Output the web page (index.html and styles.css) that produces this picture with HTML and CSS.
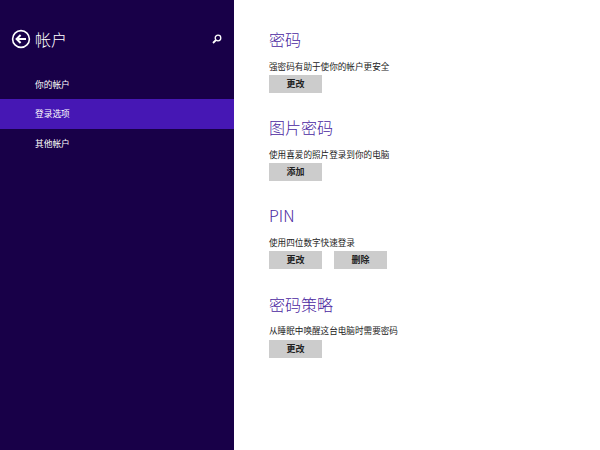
FILE: index.html
```html
<!DOCTYPE html>
<html lang="zh-CN">
<head>
  <meta charset="UTF-8" />
  <title>帐户</title>
  <link rel="stylesheet" href="styles.css">
</head>
<body>
  <div class="sidebar">
    <div class="side-head">
      <svg class="back" width="20" height="20" viewBox="0 0 20 20">
        <circle cx="10" cy="10" r="8.4" fill="none" stroke="#fff" stroke-width="1.6" />
        <path d="M15 10H6M9.6 6L5.6 10L9.6 14" fill="none" stroke="#fff" stroke-width="2" />
      </svg>
      <h1>帐户</h1>
      <svg class="search" width="10" height="10" viewBox="0 0 10 10">
        <circle cx="6" cy="4" r="2.8" fill="none" stroke="#fff" stroke-width="1.3" />
        <path d="M4 6L1 9" fill="none" stroke="#fff" stroke-width="1.8" />
      </svg>
    </div>
    <div class="nav">
      <div class="nav-item">你的帐户</div>
      <div class="nav-item active">登录选项</div>
      <div class="nav-item">其他帐户</div>
    </div>
  </div>

  <div class="main">
    <div class="section">
      <h2>密码</h2>
      <p>强密码有助于使你的帐户更安全</p>
      <div class="btns"><button>更改</button></div>
    </div>
    <div class="section">
      <h2>图片密码</h2>
      <p>使用喜爱的照片登录到你的电脑</p>
      <div class="btns"><button>添加</button></div>
    </div>
    <div class="section">
      <h2>PIN</h2>
      <p>使用四位数字快速登录</p>
      <div class="btns"><button>更改</button><button>删除</button></div>
    </div>
    <div class="section">
      <h2>密码策略</h2>
      <p>从睡眠中唤醒这台电脑时需要密码</p>
      <div class="btns"><button>更改</button></div>
    </div>
  </div>
</body>
</html>
```

FILE: styles.css
```css
html, body {
  height: 100%;
}
body {
  margin: 0;
  height: 450px;
  display: flex;
  overflow: hidden;
  background: #fff;
  font-family: "Noto Sans CJK SC", "Noto Sans", sans-serif;
}
.sidebar {
  width: 234px;
  background: #180048;
  color: #fff;
}
.side-head {
  height: 40px;
  margin-top: 19px;
  padding: 0 12px 0 11px;
  display: flex;
  align-items: center;
}
.side-head h1 {
  margin: 0 0 0 4px;
  font-size: 16px;
  font-weight: 300;
  line-height: 40px;
  flex: 1;
}
.back {
  display: block;
}
.search {
  display: block;
}
.nav {
  margin-top: 11px;
}
.nav-item {
  height: 29.4px;
  line-height: 29.4px;
  padding-left: 35px;
  font-size: 8.7px;
}
.nav-item.active {
  background: #4617b4;
}
.main {
  flex: 1;
  padding: 27px 0 0 35px;
}
.section {
  height: 88.2px;
}
h2 {
  margin: 0;
  font-size: 16px;
  font-weight: 300;
  line-height: 24px;
  color: #4a26a0;
}
.section p {
  margin: 7.5px 0 0;
  font-size: 8.6px;
  line-height: 14px;
  color: #222;
}
.btns {
  display: flex;
  gap: 12px;
  margin-top: 2.5px;
}
button {
  width: 53px;
  height: 18px;
  padding: 0;
  border: 0;
  background: #cccccc;
  color: #222;
  font-family: inherit;
  font-size: 9px;
  font-weight: 700;
  line-height: 18px;
}
```
